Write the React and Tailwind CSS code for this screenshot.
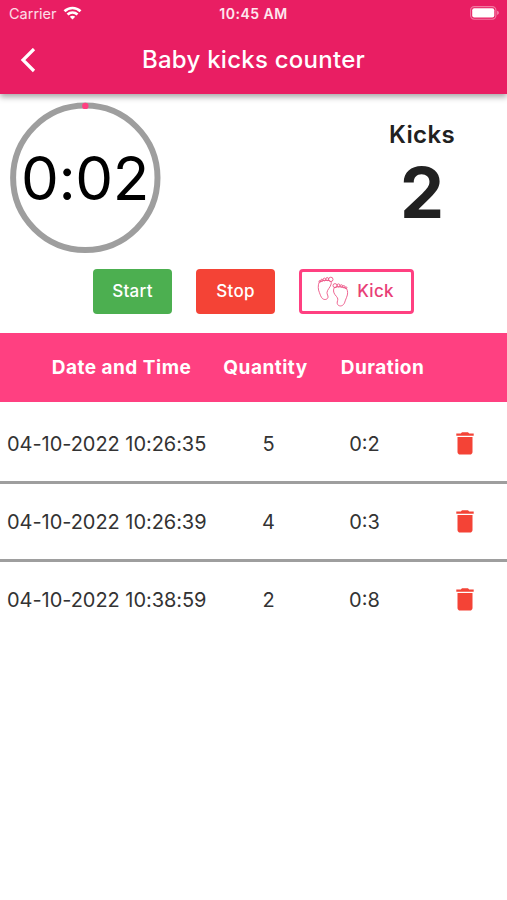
import { useState } from "react";

const initialRecords = [
  { id: 1, date: "04-10-2022 10:26:35", quantity: 5, duration: "0:2" },
  { id: 2, date: "04-10-2022 10:26:39", quantity: 4, duration: "0:3" },
  { id: 3, date: "04-10-2022 10:38:59", quantity: 2, duration: "0:8" },
];

// ── Icons ─────────────────────────────────────────────────────────────────

function WifiIcon() {
  return (
    <svg className="-mt-[2px]" width="19" height="14" viewBox="0 0 18 14" fill="none" stroke="#fff" strokeWidth="2.7">
      <path d="M1 5.2C5.500 .9 12.500 .9 17 5.200" />
      <path d="M4 8.500C6.900 5.900 11.100 5.900 14 8.500" />
      <path d="M9 13.500L6.300 10.800C7.800 9.500 10.200 9.500 11.700 10.800Z" fill="#fff" stroke="none" />
    </svg>
  );
}

function BatteryIcon() {
  return (
    <svg className="-mt-[1px]" width="30" height="14" viewBox="0 0 30 14" fill="none">
      <rect x="0.6" y="0.6" width="25.300" height="12.600" rx="3.600" stroke="#fff" strokeOpacity="0.4" strokeWidth="1.100" />
      <rect x="2.200" y="2.200" width="22.100" height="9.400" rx="2" fill="#fff" />
      <path d="M27.200 4.800C29.300 5.500 29.300 8.300 27.200 9Z" fill="#fff" fillOpacity="0.5" />
    </svg>
  );
}

function TrashIcon() {
  return (
    <svg width="18" height="23" viewBox="0 0 18 23" fill="#f44336">
      <path d="M0.300 1.500H4.800L6 0.300H12L13.200 1.500H17.700V3.700H0.300Z" />
      <path d="M1.500 5H16.500V19.900C16.500 21.400 15.400 22.500 13.900 22.500H4.100C2.600 22.500 1.500 21.400 1.500 19.900Z" />
    </svg>
  );
}

function FeetIcon() {
  return (
    <svg width="32" height="32" viewBox="0 0 32 32" fill="none" stroke="#ec5586" strokeWidth="0.9">
      {/* left foot */}
      <path d="M2.200 6.200C.8 9.500 1 13.500 2.400 16.500C3.300 18.700 3.800 21 5.500 22.600C7.500 24.200 10.500 23.600 11 21.300C11.300 19.500 9.900 18.500 10 16.500C10.200 13.500 13.500 11.400 14.200 7.800C14.500 6.300 13.900 5 12.500 4.600C9 4 5 4.200 2.200 6.200Z" />
      <circle cx="13.800" cy="3.400" r="2.200" />
      <ellipse cx="10.200" cy="3.100" rx="1.300" ry="1.600" />
      <ellipse cx="7.400" cy="3.500" rx="1.200" ry="1.400" />
      <circle cx="4.900" cy="4.300" r="1.100" />
      <circle cx="2.900" cy="5.400" r="0.900" />
      {/* right foot */}
      <path d="M17.500 11.400C16 13.400 16.300 16.500 18 18.700C20 21.100 21.400 22.500 20.600 24.600C19.900 26.500 19.900 28.500 21.700 29.500C24 30.700 26.500 29.300 27.500 26.900C28.300 24.900 28.500 23.500 29.600 21.300C31 18.200 30.900 15 29.600 12.700C26 10.700 21 10.300 17.500 11.400Z" />
      <circle cx="18" cy="9.600" r="2" />
      <ellipse cx="21.500" cy="9.400" rx="1.300" ry="1.500" />
      <circle cx="24.300" cy="9.900" r="1.200" />
      <circle cx="26.800" cy="10.700" r="1.100" />
      <circle cx="29" cy="11.700" r="0.900" />
    </svg>
  );
}

// ── Timer ring ────────────────────────────────────────────────────────────

function Timer({ value }) {
  return (
    <div className="grid h-[152px] w-[152px] place-items-center">
      <svg className="col-start-1 row-start-1" width="152" height="152" viewBox="0 0 152 152">
        <circle cx="76.300" cy="75.800" r="72.200" fill="none" stroke="#9e9e9e" strokeWidth="6" />
        <circle cx="76.300" cy="3.900" r="3.200" fill="#ff4081" />
      </svg>
      <span className="col-start-1 row-start-1 text-[60px] leading-none tracking-[-0.4px] text-black">
        {value}
      </span>
    </div>
  );
}

export default function App() {
  const [records, setRecords] = useState(initialRecords);
  const [kicks, setKicks] = useState(2);

  const handleDelete = (id) => {
    setRecords((prev) => prev.filter((record) => record.id !== id));
  };

  return (
    <div className="h-[900px] w-[507px] overflow-hidden bg-white font-['Inter',sans-serif] text-[#212121]">

      {/* Status bar + app bar */}
      <header className="h-[94px] bg-[#e91e63] text-white shadow-[0_3px_6px_rgba(0,0,0,0.35)]">
        <div className="grid h-[27px] grid-cols-[1fr_100px_1fr] items-center pr-[7px] pl-[9px]">
          <div className="flex items-center gap-[6px]">
            <span className="text-[14.5px] text-white/85">Carrier</span>
            <WifiIcon />
          </div>
          <span className="-ml-[2px] text-center text-[14px] font-semibold tracking-[0.5px] text-white/90">
            10:45 AM
          </span>
          <div className="flex justify-end">
            <BatteryIcon />
          </div>
        </div>
        <div className="grid h-[66px] grid-cols-[60px_1fr_60px] items-center">
          <button aria-label="Back" className="pl-[20px]">
            <svg width="16" height="25" viewBox="0 0 16 25" fill="none" stroke="#fff" strokeWidth="3.2">
              <path d="M14 1L3 12L14 23" />
            </svg>
          </button>
          <h1 className="text-center text-[24px] font-medium tracking-[0.25px]">Baby kicks counter</h1>
        </div>
      </header>

      {/* Timer and kick count */}
      <section className="flex h-[175px] items-start justify-between pt-[8px] pr-[51px] pl-[9px]">
        <Timer value="0:02" />
        <div className="flex w-[68px] flex-col items-center pt-[18px]">
          <span className="text-[24px] leading-[30px] font-semibold tracking-[0.4px]">Kicks</span>
          <span className="mt-[7px] text-[70px] leading-[72px] font-bold">{kicks}</span>
        </div>
      </section>

      {/* Actions */}
      <div className="flex h-[64px] items-start justify-center gap-[24px] text-[17px] font-medium tracking-[0.3px]">
        <button className="h-[45px] w-[79px] rounded-[4px] bg-[#4caf50] pt-px text-white">Start</button>
        <button className="h-[45px] w-[79px] rounded-[4px] bg-[#f44336] pt-px text-white">Stop</button>
        <button
          onClick={() => setKicks((prev) => prev + 1)}
          className="flex h-[45px] w-[115px] items-center justify-center gap-[8px] rounded-[4px] border-[3px] border-[#ff4081] pr-[2px] text-[#e83e76]"
        >
          <FeetIcon />
          <span className="pt-px">Kick</span>
        </button>
      </div>

      {/* History */}
      <div className="flex h-[69px] items-center bg-[#ff4081] pt-[2px] pl-[36px] text-[19px] font-bold tracking-[0.5px] text-white">
        <span className="w-[171px] text-center">Date and Time</span>
        <span className="w-[117px] text-center">Quantity</span>
        <span className="w-[117px] text-center">Duration</span>
      </div>
      <div className="pt-[4px] text-[20px] text-[#333]">
        {records.map((record) => (
          <div
            key={record.id}
            className="flex h-[78px] items-center border-b-[3px] border-[#9e9e9e] pl-[7px] last:border-transparent"
          >
            <span className="w-[210px] tracking-[-0.05px] whitespace-nowrap">{record.date}</span>
            <span className="w-[103px] text-center">{record.quantity}</span>
            <span className="w-[89px] text-center">{record.duration}</span>
            <button
              aria-label="Delete"
              onClick={() => handleDelete(record.id)}
              className="ml-[47px]"
            >
              <TrashIcon />
            </button>
          </div>
        ))}
      </div>
    </div>
  );
}
